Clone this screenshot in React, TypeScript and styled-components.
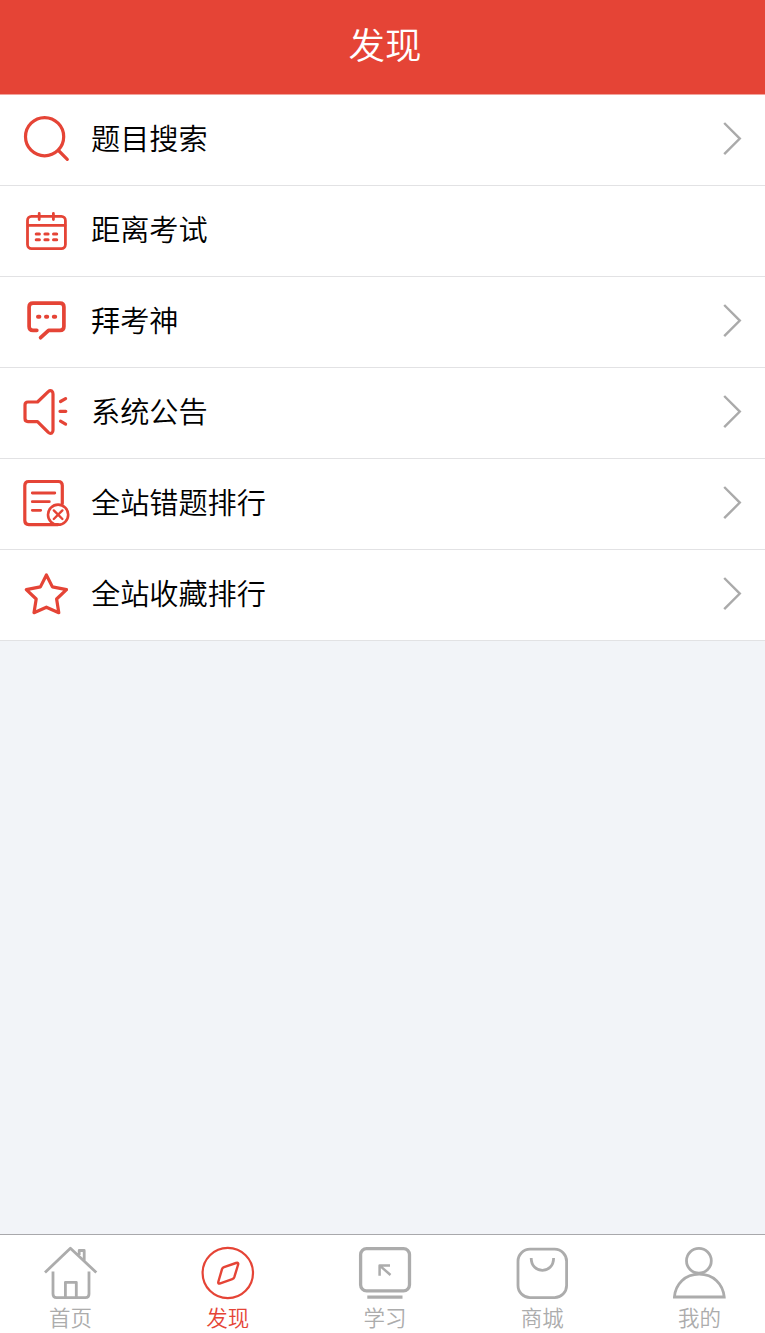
import React from 'react';
import styled, { createGlobalStyle } from 'styled-components';

const RED = '#e54436';

const GlobalStyle = createGlobalStyle`
  * { box-sizing: border-box; }
  body {
    margin: 0;
    background: #f2f4f8;
    font-family: "Noto Sans CJK SC", sans-serif;
    font-weight: 350;
  }
`;

const Screen = styled.div`
  display: flex;
  flex-direction: column;
  height: 100vh;
`;

const Header = styled.header`
  display: flex;
  align-items: center;
  justify-content: center;
  height: 95px;
  padding: 0 0 6px 5px;
  flex: none;
  background: ${RED};
  border-bottom: 1px solid #f2a39c;
  color: #fff;
`;

const Title = styled.h1`
  margin: 0;
  font-size: 36.5px;
  font-weight: 350;
  line-height: 54px;
`;

const List = styled.ul`
  flex: 1;
  margin: 0;
  padding: 0;
  list-style: none;
`;

const Row = styled.li`
  display: flex;
  align-items: center;
  height: 91px;
  padding: 0 19px;
  background: #fff;
  border-bottom: 1px solid #e2e2e4;
`;

const RowIcon = styled.svg`
  width: 54px;
  height: 54px;
  flex: none;
  fill: none;
  stroke: ${RED};
  stroke-width: 3.2;
  stroke-linecap: round;
  stroke-linejoin: round;
`;

const RowLabel = styled.span`
  flex: 1;
  padding: 0 0 7px 18px;
  color: #000;
  font-size: 29.17px;
  line-height: 44px;
`;

const Chevron = styled.svg`
  width: 24px;
  height: 36px;
  margin-bottom: 4px;
  fill: none;
  stroke: #aaa;
  stroke-width: 2.4;
`;

const TabBar = styled.nav`
  display: flex;
  justify-content: space-between;
  height: 99px;
  flex: none;
  padding: 11px 38.5px 0 43.5px;
  background: #fff;
  border-top: 1px solid #a8a8ab;
`;

const Tab = styled.div<{ $active?: boolean }>`
  display: flex;
  flex-direction: column;
  align-items: center;
  width: 54px;
  color: ${(p) => (p.$active ? RED : '#acacac')};
`;

const TabIcon = styled.svg`
  width: 54px;
  height: 54px;
  flex: none;
  fill: none;
  stroke: currentColor;
  stroke-width: 2.8;
  stroke-linejoin: round;
`;

const TabLabel = styled.span`
  font-size: 21.5px;
  line-height: 32px;
  margin-top: 1px;
  white-space: nowrap;
`;

const rows = [
  {
    label: '题目搜索',
    arrow: true,
    box: '19 113 54 54',
    icon: (
      <>
        <circle cx="44.6" cy="136.7" r="19.1" />
        <path d="M58.5 150.5L67.3 159.3" />
      </>
    ),
  },
  {
    label: '距离考试',
    arrow: false,
    box: '19 204 54 54',
    icon: (
      <>
        <rect x="27.5" y="216.4" width="37.9" height="32.2" rx="4" strokeWidth="2.8" />
        <path d="M28 225.4H65M39.2 213.5V219.5M53.4 213.5V219.5" strokeWidth="2.8" />
        <path d="M36.2 234H39.4M44.9 234H48.1M53.5 234H56.7M36.2 239.8H39.4M44.9 239.8H48.1M53.5 239.8H56.7" strokeWidth="3" />
      </>
    ),
  },
  {
    label: '拜考神',
    arrow: true,
    box: '19 295 54 54',
    icon: (
      <>
        <path
          d="M36.8 330.3H33Q29.1 330.3 29.1 326.4V307Q29.1 303.1 33 303.1H60Q63.9 303.1 63.9 307V326.4Q63.9 330.3 60 330.3H48.6L40.6 337.7"
          strokeWidth="3.7"
        />
        <path d="M38 316.8H39.4M46 316.8H47.2M53.8 316.8H55.2" strokeWidth="4" />
      </>
    ),
  },
  {
    label: '系统公告',
    arrow: true,
    box: '19 386 54 54',
    icon: (
      <>
        <path d="M28 402H37.5L48.3 391.6Q50.2 390 52 391.2Q53 392 53 394V430Q53 432 52 432.8Q50.2 434 48.3 432.4L37.5 421.6H28Q25 421.6 25 418.6V405Q25 402 28 402Z" />
        <path d="M60.5 401.5L65.6 398.6M60 411.3H65.8M60.5 421.2L65.6 424.1" />
      </>
    ),
  },
  {
    label: '全站错题排行',
    arrow: true,
    box: '19 477 54 54',
    icon: (
      <>
        <path d="M62.3 503.5V485.5Q62.3 481.5 58.3 481.5H28.8Q24.8 481.5 24.8 485.5V520.6Q24.8 524.6 28.8 524.6H58" />
        <path d="M32.3 493H54.8M32.3 501.7H49.3M32.3 510.3H40.7" strokeWidth="2.8" />
        <circle cx="58.1" cy="514.7" r="10.1" strokeWidth="2.6" />
        <path d="M53.8 510.4L62.4 519M62.4 510.4L53.8 519" strokeWidth="2.4" />
      </>
    ),
  },
  {
    label: '全站收藏排行',
    arrow: true,
    box: '19 568 54 54',
    icon: (
      <path d="M46.4 575L52.4 586.9L66.5 589.6L56.6 599L58.8 612.7L46.4 607.2L34 612.7L36.2 599L26.3 589.6L40.4 586.9Z" />
    ),
  },
];

const tabs = [
  {
    label: '首页',
    box: '44 1246 54 54',
    icon: (
      <>
        <path d="M45 1272.5L70.4 1248.2L96.3 1272.5M79.2 1255V1250.5H84.2V1261" />
        <path d="M53 1271.5V1294Q53 1297.6 56.6 1297.6H85.4Q89 1297.6 89 1294V1271.5M65.4 1297V1282.3H76.3V1297" />
      </>
    ),
  },
  {
    label: '发现',
    active: true,
    box: '201 1246 54 54',
    icon: (
      <>
        <circle cx="227.8" cy="1273" r="25.2" strokeWidth="2.2" />
        <path
          d="M218.4 1281.5L222 1269.2Q222.5 1267.8 224 1267.2L236 1263Q239 1262 238 1265L234.3 1277.2Q233.8 1278.6 232.3 1279.1L220.3 1283.3Q217.6 1284.2 218.4 1281.5Z"
          strokeWidth="2.4"
        />
      </>
    ),
  },
  {
    label: '学习',
    box: '358 1246 54 54',
    icon: (
      <>
        <rect x="360.6" y="1248.6" width="48.9" height="42.2" rx="6" strokeWidth="3.3" />
        <path d="M367.3 1297.2H402.5" strokeWidth="3.2" />
        <path d="M390 1265.4H379.6V1275.7M379.8 1265.6L390.5 1275" strokeWidth="2.5" />
      </>
    ),
  },
  {
    label: '商城',
    box: '515 1246 54 54',
    icon: (
      <>
        <rect x="518" y="1249.2" width="48.6" height="48.4" rx="12" />
        <path d="M531.2 1258C531.2 1274.5 553.6 1274.5 553.6 1258" />
      </>
    ),
  },
  {
    label: '我的',
    box: '673 1246 54 54',
    icon: (
      <>
        <circle cx="698.9" cy="1260.8" r="12.4" />
        <path d="M674.4 1297C675.5 1284 685 1274.2 699.2 1274.2C713.4 1274.2 723 1284 724.2 1297Z" strokeLinejoin="miter" />
      </>
    ),
  },
];

export default function App() {
  return (
    <Screen>
      <GlobalStyle />
      <Header>
        <Title>发现</Title>
      </Header>
      <List>
        {rows.map((row) => (
          <Row key={row.label}>
            <RowIcon viewBox={row.box}>{row.icon}</RowIcon>
            <RowLabel>{row.label}</RowLabel>
            {row.arrow && (
              <Chevron viewBox="0 0 24 36">
                <path d="M2.2 3L17.8 18.6L2.2 34.2" />
              </Chevron>
            )}
          </Row>
        ))}
      </List>
      <TabBar>
        {tabs.map((tab) => (
          <Tab key={tab.label} $active={tab.active}>
            <TabIcon viewBox={tab.box}>{tab.icon}</TabIcon>
            <TabLabel>{tab.label}</TabLabel>
          </Tab>
        ))}
      </TabBar>
    </Screen>
  );
}
